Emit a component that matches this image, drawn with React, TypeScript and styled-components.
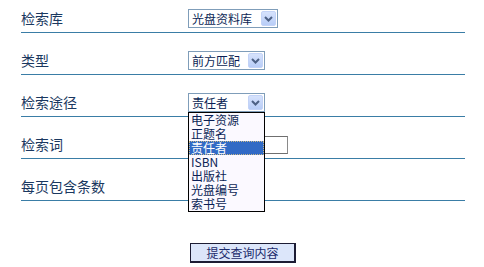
import React from 'react'
import styled, { createGlobalStyle } from 'styled-components';

const GlobalStyle = createGlobalStyle`
    body {
        margin: 0;
        background: #ffffff;
        font-family: "Noto Sans CJK SC", "Liberation Sans", sans-serif;
    }
`

const Form = styled.div`
    width: 444px;
    margin-left: 21px;
`

const Row = styled.div`
    display: flex;
    align-items: center;
    height: 19px;
    padding: 18px 0 4px;
    border-bottom: 1px solid #3a7da6;
    &:first-child {
        padding-top: 9px;
    }
`

const Label = styled.span`
    width: 167px;
    font-size: 14px;
    line-height: 19px;
    color: #1a3860;
`

const Field = styled.div`
    position: relative;
    display: flex;
    align-items: center;
    height: 19px;
`

const SelectBox = styled.div<{ $width: number }>`
    box-sizing: border-box;
    display: flex;
    align-items: center;
    justify-content: space-between;
    width: ${p => p.$width}px;
    height: 19px;
    padding: 0 1px 0 3px;
    border: 1px solid #7f9db9;
    background: #ffffff;
    font-size: 12px;
    color: #0b1f55;
`

const ArrowButton = styled.span`
    display: flex;
    align-items: center;
    justify-content: center;
    width: 15px;
    height: 15px;
    border-radius: 2px;
    background: linear-gradient(#d6e2fc, #b8cdf7);
    border: 1px solid #c3d3f7;
    box-sizing: border-box;
`

const TextInput = styled.div`
    box-sizing: border-box;
    width: 100px;
    height: 18px;
    border: 1px solid #6f6f6f;
    border-right-color: #8a8a8a;
    background: #ffffff;
`

const DropList = styled.ul`
    position: absolute;
    left: 0;
    top: 19px;
    z-index: 2;
    box-sizing: border-box;
    width: 77px;
    margin: 0;
    padding: 0;
    list-style: none;
    border: 1px solid #000000;
    background: #fbf9ff;
`

const DropItem = styled.li<{ $active?: boolean }>`
    height: 14px;
    line-height: 14px;
    padding-left: 2px;
    font-size: 12px;
    color: ${p => p.$active ? '#ffffff' : '#0b1f55'};
    background: ${p => p.$active ? '#316ac5' : 'transparent'};
    outline: ${p => p.$active ? '1px dotted #c9b98a' : 'none'};
    outline-offset: -1px;
    white-space: nowrap;
`

const ButtonRow = styled.div`
    display: flex;
    justify-content: center;
    padding-top: 42px;
`

const SubmitButton = styled.button`
    box-sizing: border-box;
    width: 106px;
    height: 20px;
    padding: 0;
    border: 1px solid #1c1c34;
    border-right-width: 2px;
    border-bottom-width: 2px;
    background: #dce6fa;
    font-family: "Noto Sans CJK SC", sans-serif;
    font-size: 12px;
    line-height: 16px;
    color: #1b2a6b;
`

function Chevron() {
    return (
        <svg width="9" height="6" viewBox="0 0 9 6">
            <path d="M1 1 L4.5 4.5 L8 1" fill="none" stroke="#4d6185" strokeWidth="2" />
        </svg>
    )
}

function Select({ value, width, children }: { value: string, width: number, children?: React.ReactNode }) {
    return (
        <Field>
            <SelectBox $width={width}>
                <span>{value}</span>
                <ArrowButton><Chevron /></ArrowButton>
            </SelectBox>
            {children}
        </Field>
    )
}

const routes = ['电子资源', '正题名', '责任者', 'ISBN', '出版社', '光盘编号', '索书号'];

export default function App() {
  return (
    <>
    <GlobalStyle />
    <Form>
        <Row>
            <Label>检索库</Label>
            <Select value="光盘资料库" width={90} />
        </Row>
        <Row>
            <Label>类型</Label>
            <Select value="前方匹配" width={77} />
        </Row>
        <Row>
            <Label>检索途径</Label>
            <Select value="责任者" width={77}>
                {/* 展开的下拉列表盖在下面两行之上 */}
                <DropList>
                    {routes.map(r => <DropItem key={r} $active={r === '责任者'}>{r}</DropItem>)}
                </DropList>
            </Select>
        </Row>
        <Row>
            <Label>检索词</Label>
            <Field><TextInput /></Field>
        </Row>
        <Row>
            <Label>每页包含条数</Label>
            <Field />
        </Row>
        <ButtonRow>
            <SubmitButton>提交查询内容</SubmitButton>
        </ButtonRow>
    </Form>
    </>
  )
}
